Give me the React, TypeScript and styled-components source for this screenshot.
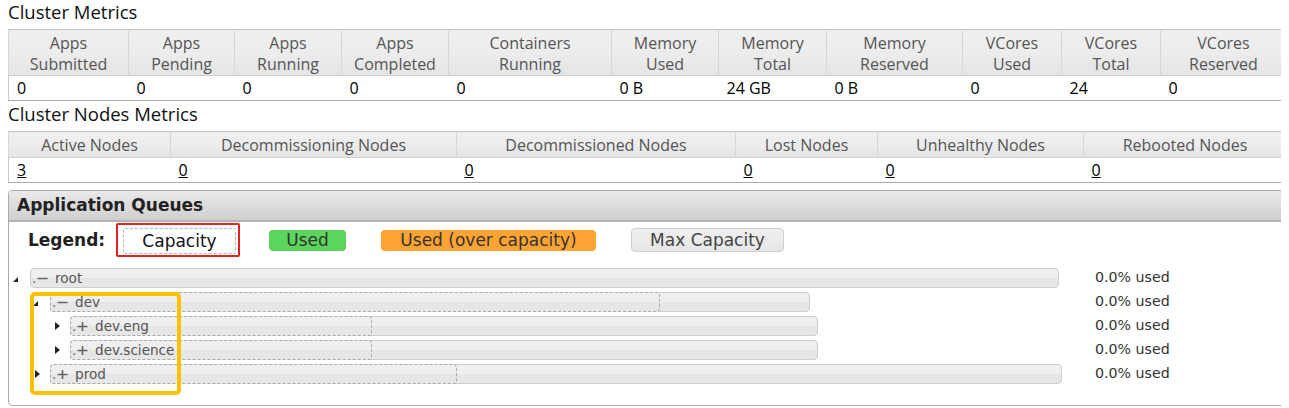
import React from 'react';
import styled, { createGlobalStyle } from 'styled-components';

const GlobalStyle = createGlobalStyle`
  body {
    margin: 0 8px;
    background: #fff;
    font-family: 'Open Sans', 'Noto Sans', Arial, sans-serif;
  }
`;

const CLUSTER_METRICS = [
  { label: ['Apps', 'Submitted'], value: '0', width: 120 },
  { label: ['Apps', 'Pending'], value: '0', width: 106 },
  { label: ['Apps', 'Running'], value: '0', width: 107 },
  { label: ['Apps', 'Completed'], value: '0', width: 107 },
  { label: ['Containers', 'Running'], value: '0', width: 163 },
  { label: ['Memory', 'Used'], value: '0 B', width: 107 },
  { label: ['Memory', 'Total'], value: '24 GB', width: 108 },
  { label: ['Memory', 'Reserved'], value: '0 B', width: 136 },
  { label: ['VCores', 'Used'], value: '0', width: 99 },
  { label: ['VCores', 'Total'], value: '24', width: 99 },
  { label: ['VCores', 'Reserved'], value: '0', width: 126 },
];

const NODE_METRICS = [
  { label: 'Active Nodes', value: '3', width: 162 },
  { label: 'Decommissioning Nodes', value: '0', width: 286 },
  { label: 'Decommissioned Nodes', value: '0', width: 279 },
  { label: 'Lost Nodes', value: '0', width: 142 },
  { label: 'Unhealthy Nodes', value: '0', width: 206 },
  { label: 'Rebooted Nodes', value: '0', width: 203 },
];

type Queue = {
  name: string;
  level: number;
  open: boolean;
  width: number;
  capacity?: number;
};

const QUEUES: Queue[] = [
  { name: 'root', level: 0, open: true, width: 1029 },
  { name: 'dev', level: 1, open: true, width: 760, capacity: 610 },
  { name: 'dev.eng', level: 2, open: false, width: 748, capacity: 302 },
  { name: 'dev.science', level: 2, open: false, width: 748, capacity: 302 },
  { name: 'prod', level: 1, open: false, width: 1012, capacity: 407 },
];

const Toggle = ({ open }: { open: boolean }) =>
  open ? (
    <svg width="6" height="6" viewBox="0 0 6 6" style={{ marginTop: 4 }}>
      <polygon points="5,0 5,5 0,5" fill="#222" />
    </svg>
  ) : (
    <svg width="5" height="8" viewBox="0 0 5 8" style={{ marginLeft: 2 }}>
      <polygon points="0,0 5,4 0,8" fill="#222" />
    </svg>
  );

const Sign = ({ open }: { open: boolean }) => (
  <svg width="11" height="11" viewBox="0 0 11 11">
    <path d="M0.5 5.5 H10.5" stroke="#666" strokeWidth="1.6" />
    {!open && <path d="M5.5 1 V10" stroke="#666" strokeWidth="1.6" />}
  </svg>
);

const App = () => {
  return (
    <Page>
      <GlobalStyle />
      <SectionTitle>Cluster Metrics</SectionTitle>
      <MetricsTable>
        <colgroup>
          {CLUSTER_METRICS.map((m) => (
            <col key={m.label.join()} style={{ width: m.width }} />
          ))}
        </colgroup>
        <thead>
          <tr>
            {CLUSTER_METRICS.map((m) => (
              <HeadCell key={m.label.join()} $tall>
                {m.label[0]}
                <br />
                {m.label[1]}
              </HeadCell>
            ))}
          </tr>
        </thead>
        <tbody>
          <tr>
            {CLUSTER_METRICS.map((m) => (
              <DataCell key={m.label.join()}>{m.value}</DataCell>
            ))}
          </tr>
        </tbody>
      </MetricsTable>

      <SectionTitle $second>Cluster Nodes Metrics</SectionTitle>
      <MetricsTable>
        <colgroup>
          {NODE_METRICS.map((m) => (
            <col key={m.label} style={{ width: m.width }} />
          ))}
        </colgroup>
        <thead>
          <tr>
            {NODE_METRICS.map((m) => (
              <HeadCell key={m.label}>{m.label}</HeadCell>
            ))}
          </tr>
        </thead>
        <tbody>
          <tr>
            {NODE_METRICS.map((m) => (
              <DataCell key={m.label}>
                <NodeLink href="#">{m.value}</NodeLink>
              </DataCell>
            ))}
          </tr>
        </tbody>
      </MetricsTable>

      <Panel>
        <PanelHeader>Application Queues</PanelHeader>
        <LegendRow>
          <LegendLabel>Legend:</LegendLabel>
          <Highlight>
            <LegendItem $kind="capacity" $width={113}>
              Capacity
            </LegendItem>
          </Highlight>
          <LegendItem $kind="used" $width={77}>
            Used
          </LegendItem>
          <LegendItem $kind="over" $width={215}>
            Used (over capacity)
          </LegendItem>
          <LegendItem $kind="max" $width={153}>
            Max Capacity
          </LegendItem>
        </LegendRow>

        <Tree>
          {QUEUES.map((q) => (
            <QueueRow key={q.name}>
              <QueueCell $level={q.level}>
                <ToggleBox>
                  <Toggle open={q.open} />
                </ToggleBox>
                <Bar style={{ width: q.width }}>
                  {q.capacity && (
                    <CapacityFill style={{ width: q.capacity }} />
                  )}
                  <BarLabel>
                    <Dot>.</Dot>
                    <Sign open={q.open} />
                    <QueueName>{q.name}</QueueName>
                  </BarLabel>
                </Bar>
              </QueueCell>
              <UsedText>0.0% used</UsedText>
            </QueueRow>
          ))}
        </Tree>
        <Annotation />
      </Panel>
    </Page>
  );
};

const Page = styled.div`
  width: 1278px;
`;

const SectionTitle = styled.div<{ $second?: boolean }>`
  font-size: 18.5px;
  line-height: 22px;
  color: #111;
  padding-top: ${(p) => (p.$second ? 2 : 1)}px;
  margin-bottom: 6px;
`;

const MetricsTable = styled.table`
  width: 1278px;
  table-layout: fixed;
  border-collapse: collapse;
  border: 1px solid #c9c9c9;
  border-bottom-color: #a9a9a9;
  font-size: 16px;
`;

const HeadCell = styled.th<{ $tall?: boolean }>`
  font-weight: normal;
  color: #555;
  line-height: 21px;
  padding: ${(p) => (p.$tall ? '3px 4px 0' : '3px 4px 1px')};
  text-align: center;
  background: linear-gradient(#efefef 0%, #ececec 50%, #e4e4e4 100%);
  border-left: 1px solid #d6d6d6;
  border-bottom: 1px solid #d0d0d0;
  white-space: nowrap;
`;

const DataCell = styled.td`
  padding: 0 8px;
  height: 24px;
  line-height: 24px;
  color: #000;
  text-align: left;
`;

const NodeLink = styled.a`
  color: #000;
  text-decoration: underline;
`;

const Panel = styled.div`
  position: relative;
  margin-top: 7px;
  height: 216px;
  box-sizing: border-box;
  border: 1px solid #aaa;
  border-radius: 4px;
  overflow: hidden;
  font-family: 'DejaVu Sans', Verdana, sans-serif;
`;

const PanelHeader = styled.div`
  height: 29px;
  line-height: 29px;
  padding-left: 8px;
  font-size: 17px;
  font-weight: bold;
  color: #222;
  background: linear-gradient(#e9e9e9, #cfcfcf);
  border-bottom: 2px solid #b4b4b4;
`;

const LegendRow = styled.div`
  display: flex;
  align-items: center;
  height: 34px;
  margin-top: 1px;
  padding-left: 19px;
  gap: 35px;
`;

const LegendLabel = styled.span`
  width: 88px;
  margin-right: -35px;
  font-size: 17px;
  font-weight: bold;
  color: #222;
`;

const Highlight = styled.div`
  display: flex;
  padding: 3px 2px 1px 5px;
  border: 2px solid #e5231d;
  border-radius: 2px;
  margin-right: -6px;
`;

const LEGEND_STYLES = {
  capacity: 'height: 26px; background: #fff; border: 1px dashed #b5b5b5; color: #111; border-radius: 2px;',
  used: 'height: 21px; background: #5bd55b; border: 0; color: #333; border-radius: 4px;',
  over: 'height: 21px; background: #ffa333; border: 0; color: #333; border-radius: 4px;',
  max: 'height: 24px; background: linear-gradient(#efefef, #e6e6e6); border: 1px solid #cfcfcf; color: #444; border-radius: 4px;',
};

const LegendItem = styled.span<{ $kind: keyof typeof LEGEND_STYLES; $width: number }>`
  display: flex;
  align-items: center;
  justify-content: center;
  box-sizing: border-box;
  width: ${(p) => p.$width}px;
  font-size: 17px;
  ${(p) => LEGEND_STYLES[p.$kind]}
`;

const Tree = styled.div`
  margin-top: 9px;
`;

const QueueRow = styled.div`
  display: flex;
  align-items: center;
  height: 24px;
`;

const QueueCell = styled.div<{ $level: number }>`
  display: flex;
  align-items: center;
  width: 1086px;
  box-sizing: border-box;
  padding-left: ${(p) => 4 + p.$level * 20}px;
`;

const ToggleBox = styled.span`
  display: flex;
  align-items: center;
  width: 17px;
  height: 20px;
`;

const Bar = styled.div`
  position: relative;
  height: 20px;
  box-sizing: border-box;
  border: 1px solid #cdcdcd;
  border-radius: 4px;
  background: linear-gradient(#efefef 50%, #e6e6e6 50%);
`;

const CapacityFill = styled.span`
  position: absolute;
  top: -1px;
  left: -1px;
  bottom: -1px;
  box-sizing: border-box;
  border: 1px dashed #a8a8a8;
  border-radius: 4px;
  background: linear-gradient(#efefef 50%, #e6e6e6 50%);
`;

const BarLabel = styled.span`
  position: relative;
  display: flex;
  align-items: center;
  height: 18px;
  padding-left: 1px;
  font-size: 13.6px;
  color: #555;
`;

const Dot = styled.span`
  width: 5px;
  color: #666;
  line-height: 18px;
`;

const QueueName = styled.span`
  margin-left: 7px;
  line-height: 18px;
`;

const UsedText = styled.span`
  font-size: 14.2px;
  color: #333;
  margin-top: -2px;
`;

const Annotation = styled.div`
  position: absolute;
  left: 21px;
  top: 101px;
  width: 151px;
  height: 103px;
  box-sizing: border-box;
  border: 4px solid #ffc000;
  border-radius: 5px;
  pointer-events: none;
`;

export default App;
